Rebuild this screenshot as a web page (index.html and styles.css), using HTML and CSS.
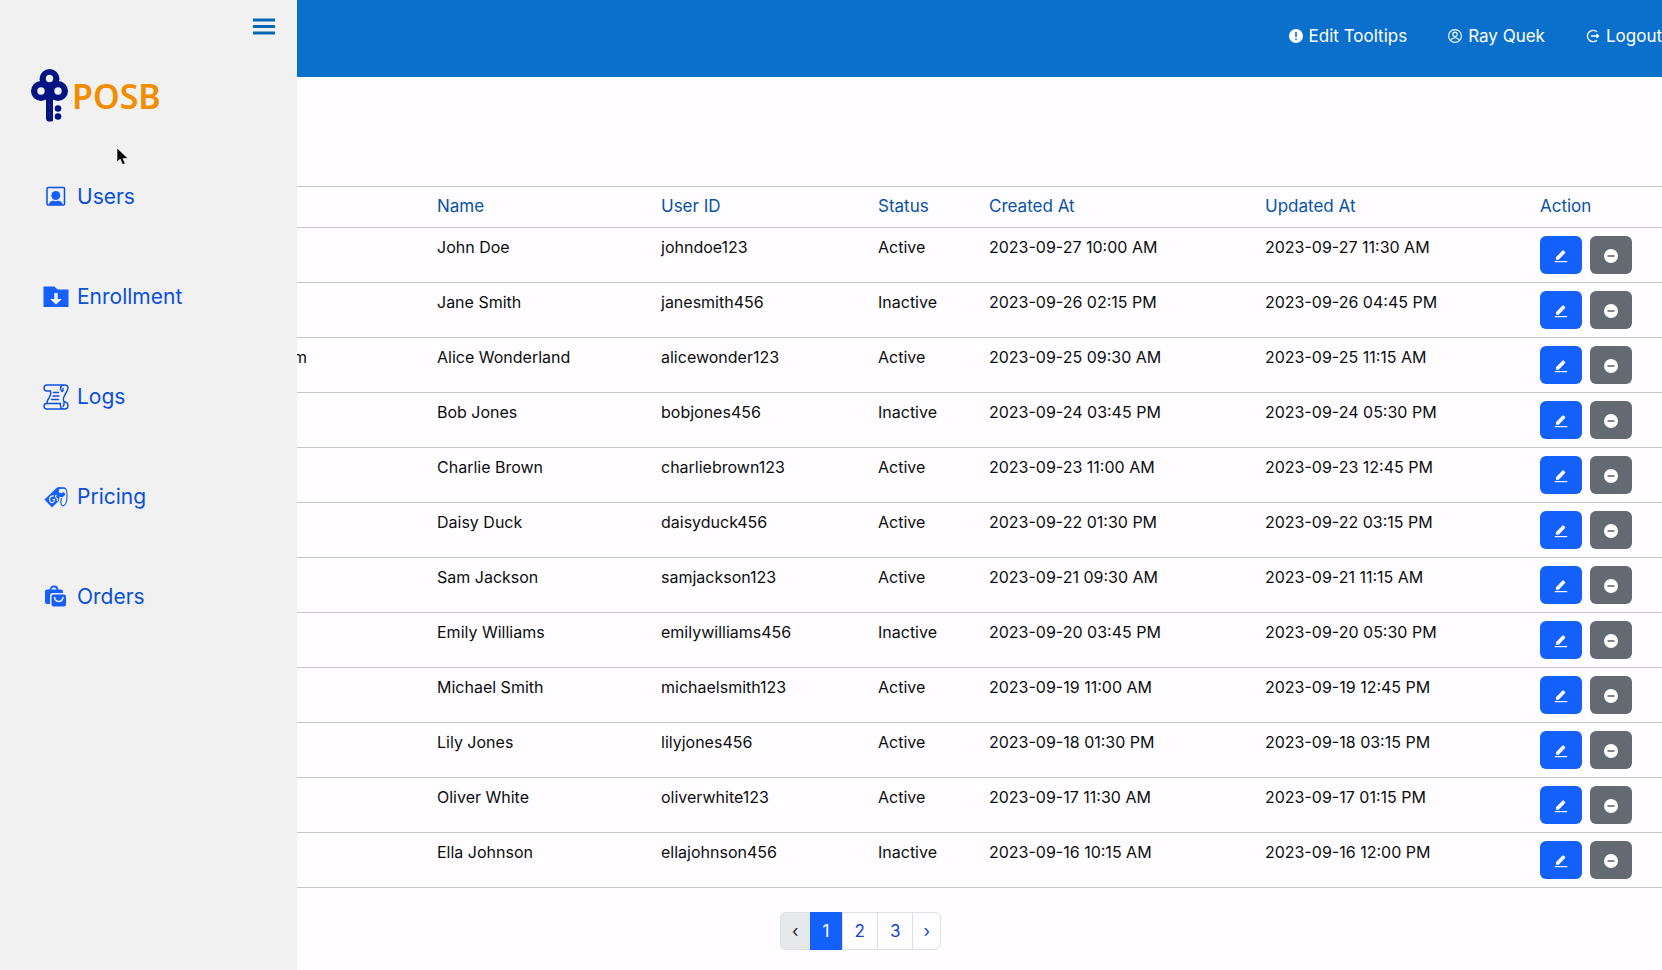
FILE: index.html
```
<!DOCTYPE html>
<html lang="en">
<head>
<meta charset="utf-8">
<title>Users</title>
<link rel="stylesheet" href="styles.css">
</head>
<body>
<svg class="sprite" aria-hidden="true">
<symbol id="edit" viewBox="0 0 14 14"><path d="M2 8.2 8.3 1.7q.8-.8 1.6 0l1 1q.8.8 0 1.6L4.7 10.7H2z" fill="currentColor"/><path d="M.8 12.6h12.4" stroke="currentColor" stroke-width="1.2"/></symbol>
<symbol id="remove" viewBox="0 0 14 14"><circle cx="7" cy="7" r="7" fill="currentColor"/><path d="M3.5 7h7" stroke="#636a71" stroke-width="1.6"/></symbol>
</svg>
<div class="layout">
<aside class="sidebar">
<button class="menu" aria-label="Toggle menu"><svg width="22" height="17" viewBox="0 0 22 17"><path d="M0 2h22M0 8.500h22M0 15h22" stroke="#0866b8" stroke-width="3"/></svg></button>
<a class="logo" href="#">
<svg width="37" height="53" viewBox="0 0 37 53"><g fill="#001482"><circle cx="18.500" cy="10" r="10"/><circle cx="10" cy="22" r="10"/><circle cx="27" cy="22" r="10"/><path d="M15 20h7v31q0 1.500-1.500 1.500H17q-2-1-2-3z"/><circle cx="27" cy="39.500" r="3.300"/><circle cx="27" cy="47.500" r="3.300"/></g><g fill="#f1f1f2"><circle cx="18.500" cy="9.500" r="3.700"/><circle cx="10" cy="22" r="3.700"/><circle cx="27" cy="22" r="3.700"/></g></svg>
<span>POSB</span></a>
<nav class="side-nav">
<a href="#"><svg width="26" height="26" viewBox="0 0 26 26"><rect x="4" y="3.500" width="17.500" height="17.500" rx="1" fill="none" stroke="#0b52e0" stroke-width="1.500"/><circle cx="12.800" cy="11.500" r="4.500" fill="#145ffd"/><path d="M5.500 21q1.500-4.500 5-4.200 2 .7 4.500 0 3.500-.3 5 4.200z" fill="#145ffd"/></svg>Users</a>
<a href="#"><svg width="26" height="26" viewBox="0 0 26 26"><path d="M.5 2.500H11.500L14.500 5.500H25.500V23H.5z" fill="#145ffd"/><path d="M11.300 9h3.400v6H19L13 20.500 7 15h4.300z" fill="#f1f1f2"/></svg>Enrollment</a>
<a href="#"><svg width="26" height="26" viewBox="0 0 26 26" fill="none" stroke="#0d50dc" stroke-width="1.400" stroke-linecap="round"><path d="M21.500 1H4Q1 1 1 4t3 3h3.500Q8.500 10 6 14q-2.500 3.500-2 5.500M21.500 1Q18 1 17.500 4q.2 3 2 3.500 1.200-1 .5-3M21.500 1Q25 1 25 4q0 2-2 5-4 6-2 8.500 4 1 4 4 0 3.500-3.500 3.500H4Q1 25 1 22q0-2.500 3-2.500h13.500q-1 5.500 4 5.500M20 22.500q1.500-2 1-5M10.500 8.500h5M10 12h6M8.500 15.500h7"/></svg>Logs</a>
<a href="#"><svg width="26" height="26" viewBox="0 0 26 26"><path d="M1.500 15.500 13.500 4q1-1 3-1l4.500.3q1.700.4 1.600 2L22 11 9 23.500z" fill="#145ffd"/><path d="M19 6.500q5-.5 5 5.500 0 9-4 10-3.500-1-2-9" stroke="#f1f1f2" stroke-width="3.200" fill="none"/><circle cx="18" cy="7" r="2.300" fill="#f1f1f2"/><path d="M11 12q-4-.5-4.500 3.500.5 3.500 3.500 3 2-1 1.500-3H9.500M13.500 11q-2 1.500 0 3t.5 3" stroke="#f1f1f2" stroke-width="1.200" fill="none"/><path d="M21.500 4q2.500 0 2.500 8 0 9-4 10-3.500-1-1.500-8" stroke="#0d55e5" stroke-width="1.100" fill="none"/></svg>Pricing</a>
<a href="#"><svg width="26" height="26" viewBox="0 0 26 26"><path d="M7.500 6Q7.500 2.500 11 2.500T14.500 6" stroke="#145ffd" stroke-width="1.800" fill="none"/><path d="M4 5.500h14q2 0 2 2V9H9.500Q7 9 7 11.500V20H4q-2 0-2-2V7.500q0-2 2-2zM10.500 10.500H21q2 0 2 2V20q0 2.500-2 2.500H10.500q-2 0-2-2.500v-7.500q0-2 2-2z" fill="#145ffd"/><path d="M11.500 13q.5 4.500 4.300 4.500T20 13" stroke="#f1f1f2" stroke-width="1.600" fill="none"/></svg>Orders</a>
</nav>
<svg class="cursor" width="13" height="19" viewBox="0 0 13 19"><path d="M1 1v14l3.200-3 2.300 5.500 2.700-1-2.300-5H12z" stroke="#fff" stroke-width=".6"/></svg>
</aside>
<div class="page">
<header class="topbar">
<a href="#"><svg width="14" height="14" viewBox="0 0 14 14"><circle cx="7" cy="7" r="7" fill="#fff"/><path d="M7 3v5M7 9.500v1.600" stroke="#0b70cb" stroke-width="1.600"/></svg>Edit Tooltips</a>
<a href="#"><svg width="14" height="14" viewBox="0 0 14 14" fill="none" stroke="#fff" stroke-width="1.100"><circle cx="7" cy="7" r="6.400"/><circle cx="7" cy="5.300" r="2.200"/><path d="M2.800 11.500q1.200-2.800 4.200-2.800t4.200 2.800"/></svg>Ray Quek</a>
<a href="#"><svg width="14" height="14" viewBox="0 0 14 14" fill="none" stroke="#fff" stroke-width="1.300"><path d="M11 2.800A5.700 5.700 0 1 0 11 11.200M5 7h7.500M10.500 5l2 2-2 2"/></svg>Logout</a>
</header>
<main>
<table class="users">
<colgroup><col class="c-email"><col class="c-name"><col class="c-id"><col class="c-status"><col class="c-created"><col class="c-updated"><col class="c-action"></colgroup>
<thead><tr><td></td><th>Name</th><th>User ID</th><th>Status</th><th>Created At</th><th>Updated At</th><th>Action</th></tr></thead>
<tbody>
<tr><td></td><td>John Doe</td><td>johndoe123</td><td>Active</td><td>2023-09-27 10:00 AM</td><td>2023-09-27 11:30 AM</td><td><div class="actions"><button class="edit" aria-label="Edit"><svg><use href="#edit"/></svg></button><button class="remove" aria-label="Remove"><svg><use href="#remove"/></svg></button></div></td></tr>
<tr><td></td><td>Jane Smith</td><td>janesmith456</td><td>Inactive</td><td>2023-09-26 02:15 PM</td><td>2023-09-26 04:45 PM</td><td><div class="actions"><button class="edit" aria-label="Edit"><svg><use href="#edit"/></svg></button><button class="remove" aria-label="Remove"><svg><use href="#remove"/></svg></button></div></td></tr>
<tr><td>m</td><td>Alice Wonderland</td><td>alicewonder123</td><td>Active</td><td>2023-09-25 09:30 AM</td><td>2023-09-25 11:15 AM</td><td><div class="actions"><button class="edit" aria-label="Edit"><svg><use href="#edit"/></svg></button><button class="remove" aria-label="Remove"><svg><use href="#remove"/></svg></button></div></td></tr>
<tr><td></td><td>Bob Jones</td><td>bobjones456</td><td>Inactive</td><td>2023-09-24 03:45 PM</td><td>2023-09-24 05:30 PM</td><td><div class="actions"><button class="edit" aria-label="Edit"><svg><use href="#edit"/></svg></button><button class="remove" aria-label="Remove"><svg><use href="#remove"/></svg></button></div></td></tr>
<tr><td></td><td>Charlie Brown</td><td>charliebrown123</td><td>Active</td><td>2023-09-23 11:00 AM</td><td>2023-09-23 12:45 PM</td><td><div class="actions"><button class="edit" aria-label="Edit"><svg><use href="#edit"/></svg></button><button class="remove" aria-label="Remove"><svg><use href="#remove"/></svg></button></div></td></tr>
<tr><td></td><td>Daisy Duck</td><td>daisyduck456</td><td>Active</td><td>2023-09-22 01:30 PM</td><td>2023-09-22 03:15 PM</td><td><div class="actions"><button class="edit" aria-label="Edit"><svg><use href="#edit"/></svg></button><button class="remove" aria-label="Remove"><svg><use href="#remove"/></svg></button></div></td></tr>
<tr><td></td><td>Sam Jackson</td><td>samjackson123</td><td>Active</td><td>2023-09-21 09:30 AM</td><td>2023-09-21 11:15 AM</td><td><div class="actions"><button class="edit" aria-label="Edit"><svg><use href="#edit"/></svg></button><button class="remove" aria-label="Remove"><svg><use href="#remove"/></svg></button></div></td></tr>
<tr><td></td><td>Emily Williams</td><td>emilywilliams456</td><td>Inactive</td><td>2023-09-20 03:45 PM</td><td>2023-09-20 05:30 PM</td><td><div class="actions"><button class="edit" aria-label="Edit"><svg><use href="#edit"/></svg></button><button class="remove" aria-label="Remove"><svg><use href="#remove"/></svg></button></div></td></tr>
<tr><td></td><td>Michael Smith</td><td>michaelsmith123</td><td>Active</td><td>2023-09-19 11:00 AM</td><td>2023-09-19 12:45 PM</td><td><div class="actions"><button class="edit" aria-label="Edit"><svg><use href="#edit"/></svg></button><button class="remove" aria-label="Remove"><svg><use href="#remove"/></svg></button></div></td></tr>
<tr><td></td><td>Lily Jones</td><td>lilyjones456</td><td>Active</td><td>2023-09-18 01:30 PM</td><td>2023-09-18 03:15 PM</td><td><div class="actions"><button class="edit" aria-label="Edit"><svg><use href="#edit"/></svg></button><button class="remove" aria-label="Remove"><svg><use href="#remove"/></svg></button></div></td></tr>
<tr><td></td><td>Oliver White</td><td>oliverwhite123</td><td>Active</td><td>2023-09-17 11:30 AM</td><td>2023-09-17 01:15 PM</td><td><div class="actions"><button class="edit" aria-label="Edit"><svg><use href="#edit"/></svg></button><button class="remove" aria-label="Remove"><svg><use href="#remove"/></svg></button></div></td></tr>
<tr><td></td><td>Ella Johnson</td><td>ellajohnson456</td><td>Inactive</td><td>2023-09-16 10:15 AM</td><td>2023-09-16 12:00 PM</td><td><div class="actions"><button class="edit" aria-label="Edit"><svg><use href="#edit"/></svg></button><button class="remove" aria-label="Remove"><svg><use href="#remove"/></svg></button></div></td></tr>
</tbody>
</table>
<nav class="pagination" aria-label="Pages">
<button class="prev" disabled>‹</button><button class="current">1</button><button>2</button><button>3</button><button>›</button>
</nav>
</main>
</div>
</div>
</body>
</html>
```
FILE: styles.css
```
* { box-sizing: border-box; }
body {
  margin: 0;
  background: #fffdff;
  color: #0c0d10;
  font-family: Inter, "Open Sans", sans-serif;
  font-size: 16px;
  line-height: 24px;
}
a { text-decoration: none; }
button { font: inherit; cursor: pointer; }
svg { display: block; flex: none; }
.sprite { display: none; }
.layout { display: flex; min-height: 100vh; overflow: hidden; }
.sidebar {
  position: relative;
  z-index: 1;
  flex: none;
  width: 297px;
  background: #f1f1f2;
}
.menu {
  display: block;
  margin: 18px 22px 0 auto;
  padding: 0;
  border: 0;
  background: none;
}
.logo {
  display: flex;
  align-items: center;
  gap: 4px;
  margin: 34px 0 0 31px;
  color: #f28c00;
  font-family: "Noto Sans", sans-serif;
  font-size: 34px;
  font-weight: 600;
  line-height: 52px;
}
.side-nav {
  display: flex;
  flex-direction: column;
  gap: 70px;
  margin: 60px 0 0 43px;
}
.side-nav a {
  display: flex;
  align-items: center;
  gap: 8px;
  color: #0b50d8;
  font-size: 21px;
  line-height: 30px;
}
.cursor { position: absolute; left: 116px; top: 147px; }
.page { flex: 1; min-width: 0; }
.topbar {
  display: flex;
  justify-content: flex-end;
  gap: 41px;
  padding: 24px 0 29px;
  background: #0b70cb;
}
.topbar a {
  display: flex;
  align-items: center;
  gap: 6px;
  color: #fff;
  font-size: 17px;
}
main { margin-left: -12px; padding-top: 109px; }
.users {
  width: 100%;
  table-layout: fixed;
  border-collapse: collapse;
  border-top: 1px solid #c3c5c9;
}
.users tr { border-bottom: 1px solid #c3c5c9; }
.users th, .users td { padding: 7px 8px 9px; text-align: left; vertical-align: top; white-space: nowrap; }
.users td:last-child { padding: 8px; }
.users th { color: #0753a8; font-size: 17px; font-weight: 400; }
.c-email { width: 144px; }
.c-name { width: 224px; }
.c-id { width: 217px; }
.c-status { width: 111px; }
.c-created { width: 276px; }
.c-updated { width: 275px; }
.c-action { width: 130px; }
.actions { display: flex; gap: 8px; }
.actions button {
  display: flex;
  align-items: center;
  justify-content: center;
  width: 42px;
  height: 38px;
  padding: 2px 0 0;
  border: 0;
  border-radius: 6px;
  color: #fff;
}
.actions svg { width: 14px; height: 14px; }
.edit { background: #1460fb; }
.remove { background: #636a71; }
.pagination {
  display: flex;
  justify-content: center;
  margin: 24px 225px 0 0;
}
.pagination button {
  height: 38px;
  margin-left: -1px;
  padding: 0 12px;
  border: 1px solid #dcdfe4;
  background: #fffdff;
  color: #0b45d0;
  font-size: 17px;
}
.pagination button:first-child { padding: 0 11px; border-radius: 6px 0 0 6px; }
.pagination button:last-child { padding: 0 10px; border-radius: 0 6px 6px 0; }
.pagination .prev { background: #e6e9ec; color: #212529; }
.pagination .current { border-color: #1460fb; background: #1460fb; color: #fff; }
```
